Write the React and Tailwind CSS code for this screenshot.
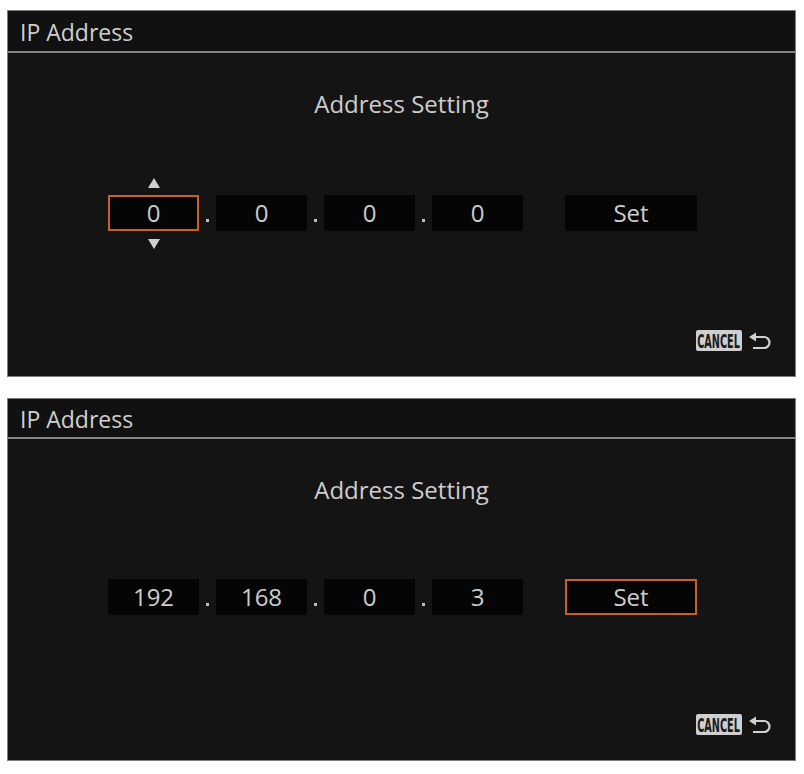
import React from "react";

const font = { fontFamily: '"Open Sans", "Noto Sans", sans-serif' };

function ReturnIcon() {
  return (
    <svg width="24" height="18" viewBox="0 0 24 18" className="block">
      <polygon points="1,5 8,0.5 8,9.5" fill="#d0d0d0" />
      <path d="M7 5 H16 A5.5 5.5 0 0 1 16 16 H5" fill="none" stroke="#d0d0d0" strokeWidth="2.2" />
    </svg>
  );
}

function Cancel() {
  return (
    <div className="flex items-center gap-[6px]">
      <div className="w-[46px] h-[21px] bg-[#cfcfcf] rounded-[2px] flex items-center justify-center overflow-hidden">
        <span
          className="text-[20px] leading-none font-bold text-[#1a1a1a] inline-block scale-x-[0.54] whitespace-nowrap"
          style={{ fontFamily: '"DejaVu Sans Condensed", "DejaVu Sans", sans-serif' }}
        >
          CANCEL
        </span>
      </div>
      <ReturnIcon />
    </div>
  );
}

function Dot() {
  return (
    <div className="w-[17px] h-[36px] flex justify-center">
      <div className="w-[3px] h-[3px] bg-[#bdbdbd] mt-[24px]" />
    </div>
  );
}

function Field({ value, active, arrows }) {
  return (
    <div className="relative">
      {arrows && (
        <>
          <div className="absolute left-1/2 -translate-x-1/2 -top-[17px] w-0 h-0 border-l-[6px] border-r-[6px] border-b-[10px] border-l-transparent border-r-transparent border-b-[#cfcfcf]" />
          <div className="absolute left-1/2 -translate-x-1/2 -bottom-[18px] w-0 h-0 border-l-[6px] border-r-[6px] border-t-[10px] border-l-transparent border-r-transparent border-t-[#cfcfcf]" />
        </>
      )}
      <div
        className={
          active
            ? "w-[91px] h-[36px] bg-[#050505] border-2 border-[#c9611c] flex items-center justify-center text-[24px] text-[#cdcdcd]"
            : "w-[91px] h-[36px] bg-[#050505] flex items-center justify-center text-[24px] text-[#cdcdcd]"
        }
      >
        {value}
      </div>
    </div>
  );
}

function Panel({ values, activeIndex, setActive, heightClass, headerClass, gapClass }) {
  return (
    <div className={"w-[789px] border border-[#7c7c7c] bg-[#141414] flex flex-col " + heightClass} style={font}>
      <div className={"bg-[#111111] border-b-2 border-[#858585] flex items-center pl-[12px] pt-[2px] text-[23px] text-[#cfcfcf] " + headerClass}>
        IP Address
      </div>
      <div className="flex-1 flex flex-col">
        <div className="pt-[35px] text-center text-[24px] leading-[32px] text-[#cdcdcd]">Address Setting</div>
        <div className={"flex justify-center " + gapClass}>
          <div className="flex items-start ml-[2px]">
            {values.map((v, i) => (
              <React.Fragment key={i}>
                {i > 0 && <Dot />}
                <Field value={v} active={activeIndex === i} arrows={activeIndex === i} />
              </React.Fragment>
            ))}
            <div
              className={
                setActive
                  ? "ml-[42px] w-[132px] h-[36px] bg-[#050505] border-2 border-[#c9611c] flex items-center justify-center text-[24px] text-[#cdcdcd]"
                  : "ml-[42px] w-[132px] h-[36px] bg-[#050505] flex items-center justify-center text-[24px] text-[#cdcdcd]"
              }
            >
              Set
            </div>
          </div>
        </div>
        <div className="mt-auto flex justify-end pr-[23px] pb-[25px]">
          <Cancel />
        </div>
      </div>
    </div>
  );
}

export default function App() {
  return (
    <div className="w-[804px] h-[774px] bg-white overflow-hidden">
      <div className="pt-[10px] pl-[7px] flex flex-col gap-[21px]">
        <Panel values={["0", "0", "0", "0"]} activeIndex={0} setActive={false} heightClass="h-[367px]" headerClass="h-[42px]" gapClass="mt-[75px]" />
        <Panel values={["192", "168", "0", "3"]} activeIndex={-1} setActive={true} heightClass="h-[363px]" headerClass="h-[40px]" gapClass="mt-[73px]" />
      </div>
    </div>
  );
}
